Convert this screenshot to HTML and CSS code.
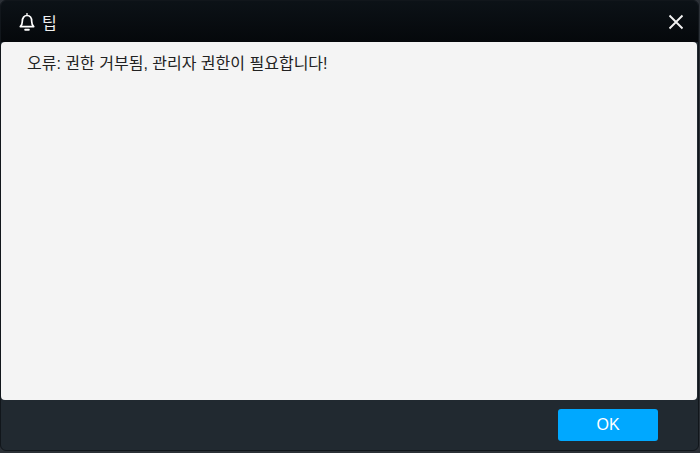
FILE: index.html
```html
<!DOCTYPE html>
<html lang="ko">
<head>
  <meta charset="UTF-8">
  <meta name="viewport" content="width=device-width, initial-scale=1">
  <title>팁</title>
  <link rel="stylesheet" href="styles.css">
</head>
<body>

  <div class="dialog">
    <!-- TITLE BAR -->
    <div class="title-bar">
      <div class="title">
        <svg class="bell" width="16" height="20" viewBox="0 0 16 20" fill="none" stroke="#fff" stroke-width="1.7">
          <path d="M8 1.2v1.6"/>
          <path d="M1.3 14.6c1.2-1.2 2-2.4 2-5.2 0-3.6 1.9-5.9 4.7-5.9s4.7 2.3 4.7 5.9c0 2.8.8 4 2 5.2z" stroke-linejoin="round"/>
          <path d="M6.2 17.8h3.6" stroke-width="2" stroke-linecap="round"/>
        </svg>
        <span>팁</span>
      </div>
      <button class="close-btn" aria-label="닫기">
        <svg width="16" height="16" viewBox="0 0 16 16" stroke="#f2f2f2" stroke-width="1.9">
          <path d="M1.5 1.5l13 13M14.5 1.5l-13 13"/>
        </svg>
      </button>
    </div>

    <!-- MESSAGE -->
    <div class="message">오류: 권한 거부됨, 관리자 권한이 필요합니다!</div>

    <!-- FOOTER -->
    <div class="footer">
      <button class="ok-btn">OK</button>
    </div>
  </div>

</body>
</html>
```

FILE: styles.css
```css
* { margin: 0; padding: 0; box-sizing: border-box; }
html, body { height: 100%; }
body { background: #2b3036; font-family: 'Liberation Sans', 'Noto Sans CJK KR', sans-serif; overflow: hidden; }

.dialog {
  display: flex; flex-direction: column;
  width: 699px; height: 451px;
  background: #212930;
  border: 1px solid #11161b;
  border-radius: 6px;
  overflow: hidden;
}

/* TITLE BAR */
.title-bar {
  display: flex; align-items: center; justify-content: space-between;
  height: 41px; flex: none;
  padding: 0 14px 0 18px;
  background: linear-gradient(180deg, #0c1217 0%, #05080b 100%);
}
.title { display: flex; align-items: center; gap: 7px; color: #f0f0f0; font-size: 16px; }
.bell { display: block; }
.close-btn { display: flex; background: none; border: none; cursor: pointer; }

/* MESSAGE */
.message {
  flex: 1;
  padding: 10px 26px;
  background: #f4f4f4;
  border-radius: 4px;
  margin-right: 1px;
  color: #222;
  font-size: 16px; line-height: 23px;
}

/* FOOTER */
.footer {
  display: flex; align-items: center; justify-content: flex-end;
  height: 50px; flex: none;
  padding-right: 40px;
}
.ok-btn {
  width: 100px; height: 32px;
  background: #00a8ff; color: #fff;
  border: none; border-radius: 3px;
  font-family: inherit; font-size: 16px;
  cursor: pointer;
}
```
